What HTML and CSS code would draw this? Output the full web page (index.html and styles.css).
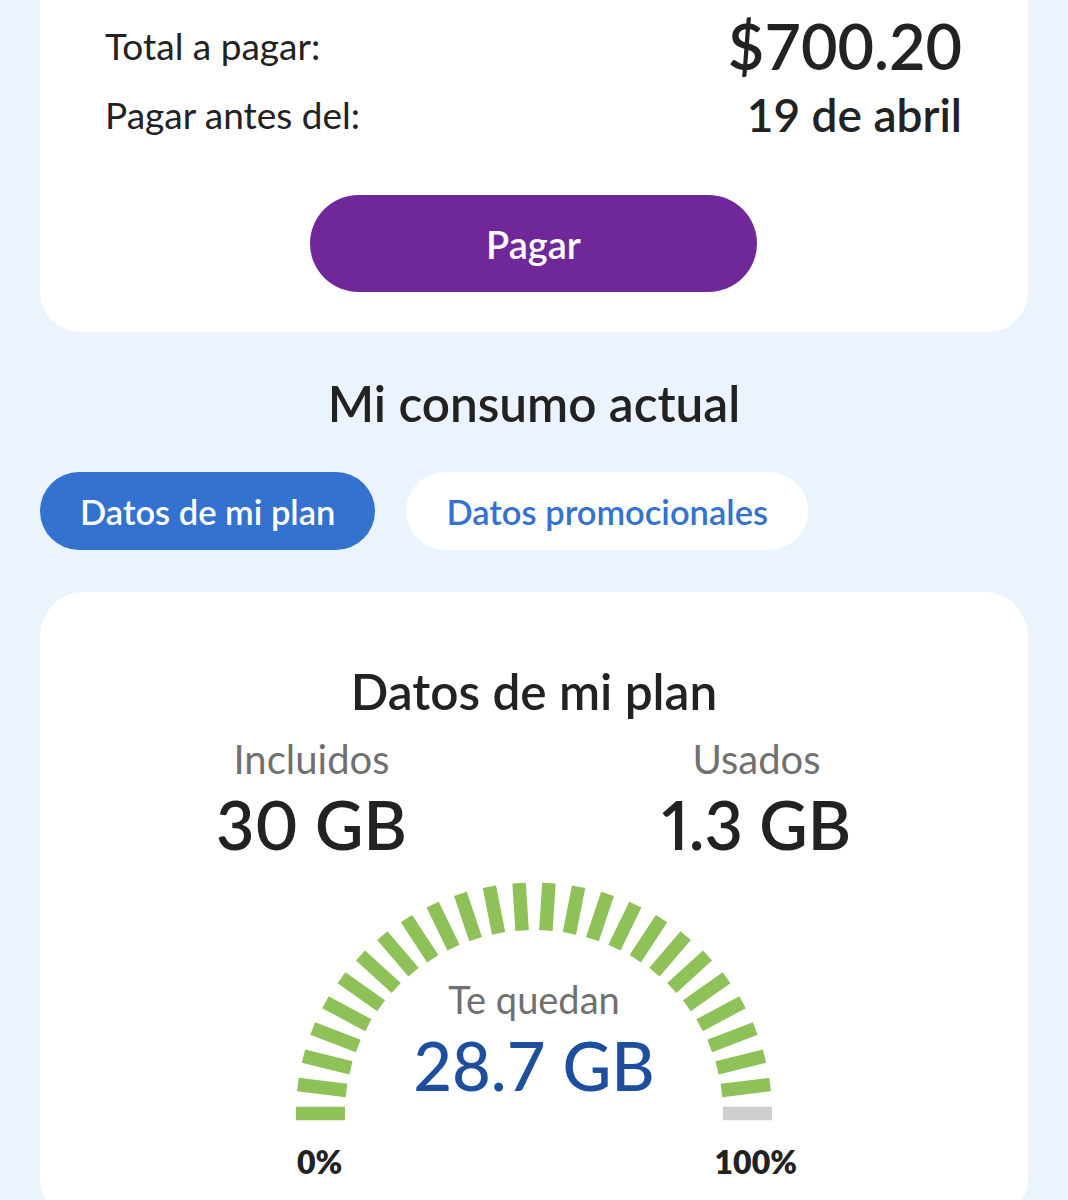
FILE: index.html
```html
<!DOCTYPE html>
<html lang="es">
<head>
  <meta charset="UTF-8">
  <title>Mi consumo</title>
  <link rel="stylesheet" href="styles.css">
</head>
<body>
  <div class="page">
    <section class="card bill">
      <div class="bill-row total">
        <span class="label">Total a pagar:</span>
        <span class="amount">$700.20</span>
      </div>
      <div class="bill-row due">
        <span class="label">Pagar antes del:</span>
        <span class="date">19 de abril</span>
      </div>
      <button class="pay-btn">Pagar</button>
    </section>

    <h2 class="section-title">Mi consumo actual</h2>

    <div class="tabs">
      <button class="tab active">Datos de mi plan</button>
      <button class="tab">Datos promocionales</button>
    </div>

    <section class="card usage">
      <h3>Datos de mi plan</h3>
      <div class="stats">
        <div class="stat">
          <div class="stat-label">Incluidos</div>
          <div class="stat-value">30 GB</div>
        </div>
        <div class="stat">
          <div class="stat-label">Usados</div>
          <div class="stat-value">1.3 GB</div>
        </div>
      </div>

      <div class="gauge">
        <svg width="500" height="252" viewBox="0 0 500 252">
          <g class="ticks">
            <line x1="61" y1="243.5" x2="12" y2="243.5"/>
            <line x1="62.49" y1="220.52" x2="13.88" y2="214.57"/>
            <line x1="66.94" y1="197.91" x2="19.48" y2="186.09"/>
            <line x1="74.27" y1="176.01" x2="28.71" y2="158.51"/>
            <line x1="84.38" y1="155.18" x2="41.44" y2="132.28"/>
            <line x1="97.10" y1="135.74" x2="57.45" y2="107.80"/>
            <line x1="112.22" y1="118.00" x2="76.51" y2="85.46"/>
            <line x1="129.53" y1="102.24" x2="98.29" y2="65.62"/>
            <line x1="148.73" y1="88.71" x2="122.47" y2="48.58"/>
            <line x1="169.53" y1="77.62" x2="148.66" y2="34.61"/>
            <line x1="191.60" y1="69.14" x2="176.45" y2="23.94"/>
            <line x1="214.59" y1="63.42" x2="205.40" y2="16.73"/>
            <line x1="238.13" y1="60.53" x2="235.06" y2="13.09"/>
            <line x1="261.87" y1="60.53" x2="264.94" y2="13.09"/>
            <line x1="285.41" y1="63.42" x2="294.60" y2="16.73"/>
            <line x1="308.40" y1="69.14" x2="323.55" y2="23.94"/>
            <line x1="330.47" y1="77.62" x2="351.34" y2="34.61"/>
            <line x1="351.27" y1="88.71" x2="377.53" y2="48.58"/>
            <line x1="370.47" y1="102.24" x2="401.71" y2="65.62"/>
            <line x1="387.78" y1="118.00" x2="423.49" y2="85.46"/>
            <line x1="402.90" y1="135.74" x2="442.55" y2="107.80"/>
            <line x1="415.62" y1="155.18" x2="458.56" y2="132.28"/>
            <line x1="425.73" y1="176.01" x2="471.29" y2="158.51"/>
            <line x1="433.06" y1="197.91" x2="480.52" y2="186.09"/>
            <line x1="437.51" y1="220.52" x2="486.12" y2="214.57"/>
            <line class="empty" x1="439" y1="243.5" x2="488" y2="243.5"/>
          </g>
        </svg>
        <div class="gauge-center">
          <div class="remaining-label">Te quedan</div>
          <div class="remaining-value">28.7 GB</div>
        </div>
        <div class="gauge-scale">
          <span>0%</span>
          <span>100%</span>
        </div>
      </div>
    </section>
  </div>
</body>
</html>
```

FILE: styles.css
```css
body {
  margin: 0;
  background: #ebf4fd;
  font-family: Lato, "Liberation Sans", sans-serif;
  color: #222;
  overflow: hidden;
}

.page {
  padding: 0 40px;
}

.card {
  background: #fff;
}

/* bill summary */
.bill {
  margin-top: -40px;
  padding: 51px 66px 40px 65px;
  border-radius: 0 0 40px 40px;
}

.bill-row {
  display: flex;
  justify-content: space-between;
  align-items: center;
}

.total {
  line-height: 70px;
}

.due {
  margin-top: 9px;
  line-height: 50px;
}

.label {
  font-size: 37px;
  font-weight: 400;
}

.amount {
  font-size: 63px;
  font-weight: 600;
}

.date {
  font-size: 46px;
  font-weight: 600;
}

.pay-btn {
  display: block;
  margin: 55px auto 0;
  width: 447px;
  height: 97px;
  border: none;
  border-radius: 49px;
  background: #6f2799;
  color: #fff;
  font-family: inherit;
  font-size: 38px;
  font-weight: 600;
}

/* consumption */
.section-title {
  margin: 41px 0 0;
  text-align: center;
  font-size: 49.5px;
  line-height: 60px;
  font-weight: 600;
}

.tabs {
  display: flex;
  gap: 31px;
  margin-top: 39px;
}

.tab {
  height: 78px;
  padding: 0 40px;
  border: none;
  border-radius: 39px;
  background: #fff;
  color: #3372cf;
  font-family: inherit;
  font-size: 34.5px;
  font-weight: 600;
}

.tab.active {
  background: #3372cf;
  color: #fff;
}

.usage {
  margin-top: 42px;
  padding: 71px 0 40px;
  border-radius: 44px;
}

.usage h3 {
  margin: 0;
  text-align: center;
  font-size: 49.5px;
  line-height: 56px;
  font-weight: 600;
}

.stats {
  display: grid;
  grid-template-columns: 445px 445px;
  justify-content: center;
  margin-top: 16px;
  text-align: center;
}

.stat-label {
  font-size: 40px;
  line-height: 48px;
  color: #707070;
}

.stat-value {
  margin-top: 5px;
  font-size: 66.5px;
  line-height: 72px;
  font-weight: 600;
  font-variant-numeric: proportional-nums;
}

/* gauge */
.gauge {
  position: relative;
  width: 500px;
  margin: 10px auto 0;
}

.gauge svg {
  display: block;
}

.ticks line {
  stroke: #8ec157;
  stroke-width: 13.5;
}

.ticks line.empty {
  stroke: #cfcfcf;
}

.gauge-center {
  position: absolute;
  top: 106px;
  left: 0;
  right: 0;
  text-align: center;
}

.remaining-label {
  font-size: 38px;
  line-height: 46px;
  color: #707070;
}

.remaining-value {
  margin-top: 7px;
  font-size: 67px;
  line-height: 72px;
  font-weight: 500;
  color: #1d4f9e;
}

.gauge-scale {
  display: flex;
  justify-content: space-between;
  margin: 20px -13px 0 13px;
  font-size: 32px;
  line-height: 40px;
  font-weight: 800;
}
```
